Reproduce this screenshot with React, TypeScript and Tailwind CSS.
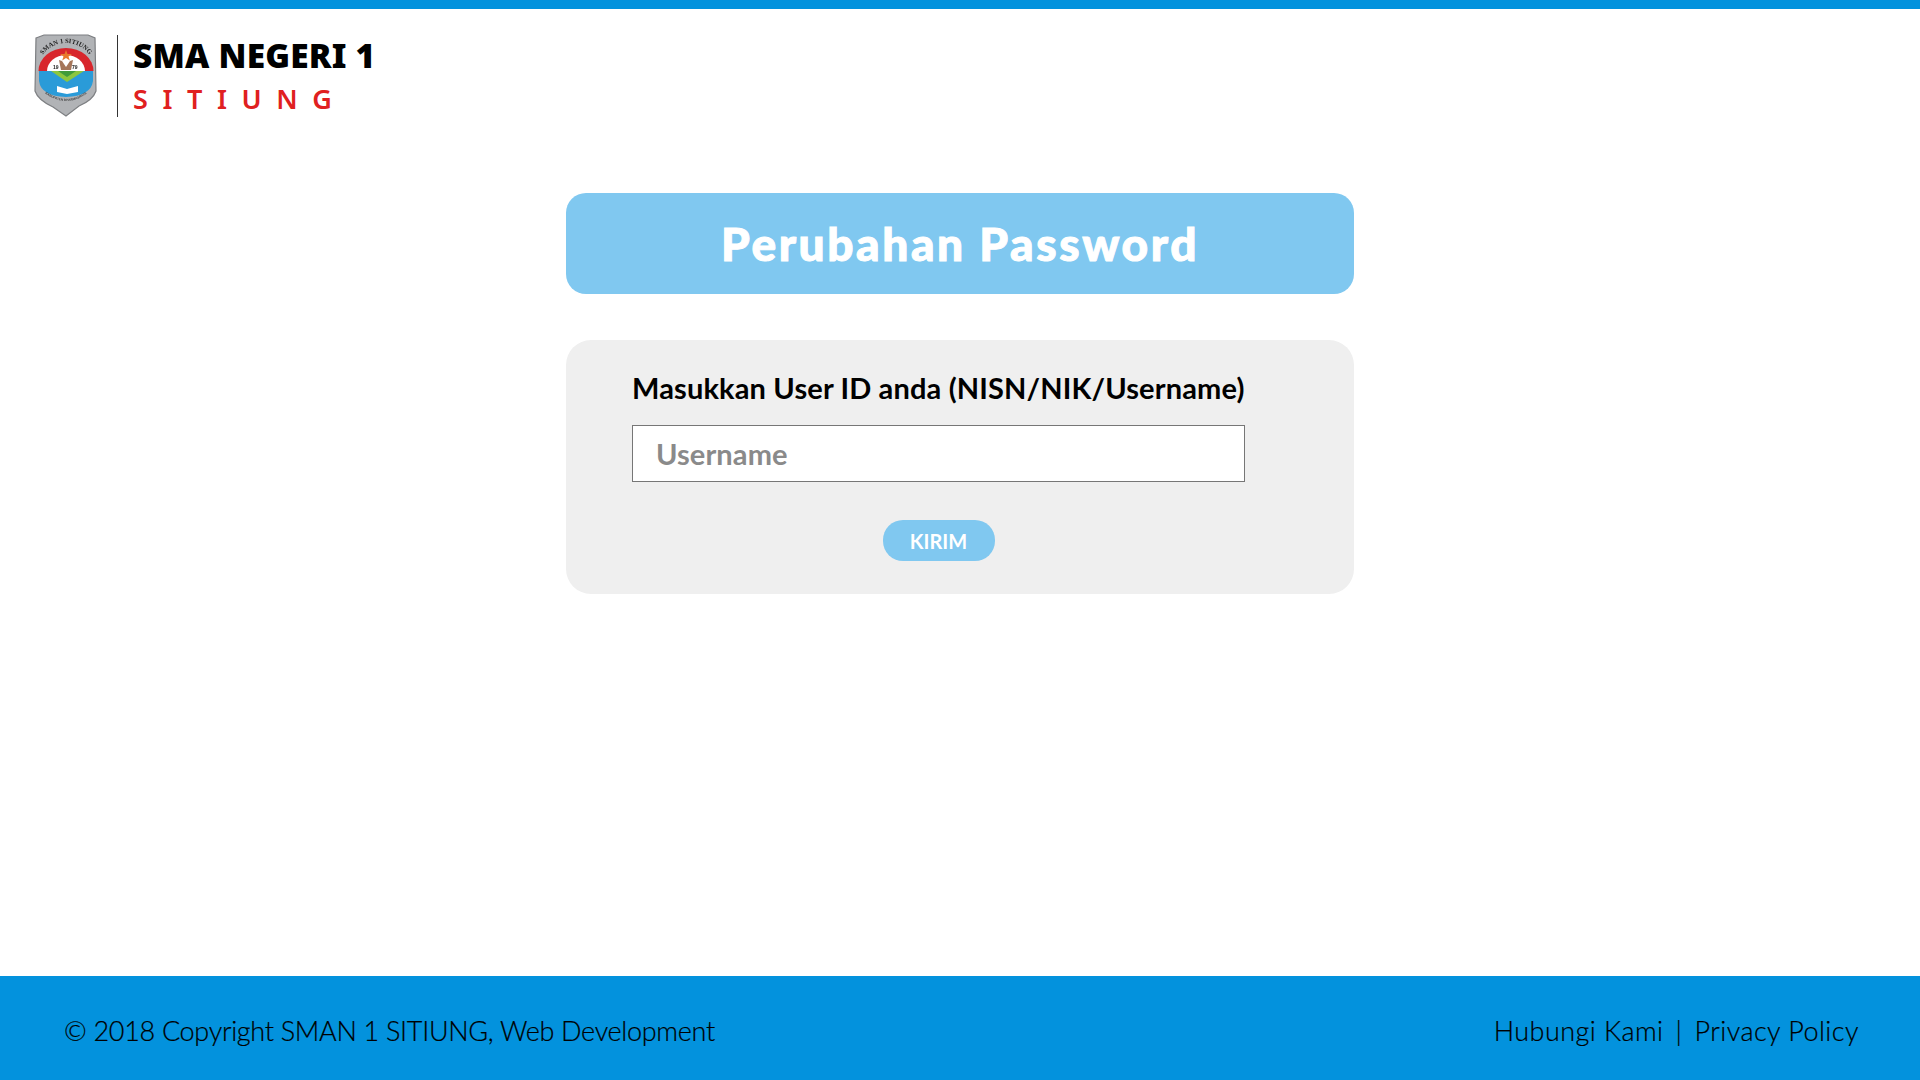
import React from "react";

function Shield() {
  return (
    <svg width="64" height="84" viewBox="0 0 64 84" className="shrink-0 blur-[0.4px]">
      <defs>
        <path id="arcTop" d="M5 36 A28 27 0 0 1 61 36" fill="none" />
        <path id="arcBot" d="M10 58 Q33 76 56 58" fill="none" />
      </defs>
      <path d="M3 4 L11 1 L55 1 L62 4 L63 57 Q60 66 46 72 L33 82 L20 73 Q5 66 2 57 Z" fill="#b1b3b6" stroke="#7d7f82" strokeWidth="1.2" />
      <path d="M5.5 37 A27.5 23 0 0 1 60.5 37 Z" fill="#d8262c" />
      <path d="M14 37 A19 16 0 0 1 52 37 Z" fill="#ffffff" />
      <path d="M6 37 L60 37 L60 47 Q58 62 33 63 Q8 62 6 47 Z" fill="#2a9bd8" />
      <path d="M18 37 L51 37 L34 48 Z" fill="#8cc63f" />
      <path d="M25 37 L43 37 L34 43 Z" fill="#3f9b3a" />
      <path d="M24 52 L34 55 L45 52 L45 58 L34 60 L24 58 Z" fill="#ffffff" />
      <path d="M33 16 L34.5 20 L39 20 L35.5 22.5 L36.8 26.5 L33 24 L29.2 26.5 L30.5 22.5 L27 20 L31.5 20 Z" fill="#e8792b" />
      <path d="M26 26 L29 27 L33 33 L37 27 L40 26 L38 36 L28 36 Z" fill="#a5765a" />
      <text x="20" y="35" fontSize="5" fontWeight="700" fill="#222222" fontFamily="Liberation Sans, sans-serif">19</text>
      <text x="39" y="35" fontSize="5" fontWeight="700" fill="#222222" fontFamily="Liberation Sans, sans-serif">79</text>
      <text fontSize="6.6" fontWeight="700" fill="#222222" fontFamily="Liberation Serif, serif" textAnchor="middle">
        <textPath href="#arcTop" startOffset="50%">SMAN 1 SITIUNG</textPath>
      </text>
      <text fontSize="3.2" fontWeight="700" fill="#444444" fontFamily="Liberation Sans, sans-serif" textAnchor="middle">
        <textPath href="#arcBot" startOffset="50%">KABUPATEN DHARMASRAYA</textPath>
      </text>
    </svg>
  );
}

export default function App() {
  return (
    <div className="flex min-h-screen flex-col bg-white font-['Lato',sans-serif] text-black">
      <div className="h-[9px] bg-[#0392dd]" />
      <header className="flex items-center pl-[33px] pt-[25px]">
        <Shield />
        <div className="ml-[20px] h-[82px] w-px bg-[#333333]" />
        <div className="ml-[15px] flex flex-col">
          <span className="-mt-[4px] font-['Noto_Sans',sans-serif] text-[33.5px] leading-[40px] font-black tracking-[0.2px]">SMA NEGERI 1</span>
          <span className="mt-[9px] font-['Noto_Sans',sans-serif] text-[27px] leading-[30px] font-semibold tracking-[14.6px] text-[#e02020]">SITIUNG</span>
        </div>
      </header>
      <main className="flex flex-1 flex-col items-center pt-[75px]">
        <div className="flex h-[101px] w-[788px] items-center justify-center rounded-[20px] bg-[#80c8f0]">
          <h1 className="text-[46px] leading-none font-black tracking-[2.6px] text-white [-webkit-text-stroke:1px_white]">Perubahan Password</h1>
        </div>
        <form className="mt-[46px] h-[254px] w-[788px] rounded-[25px] bg-[#efefef] px-[66px] pt-[30px]">
          <label className="block w-[613px] text-[29px] leading-[36px] font-bold tracking-[0.15px] whitespace-nowrap">Masukkan User ID anda (NISN/NIK/Username)</label>
          <input
            placeholder="Username"
            className="mt-[19px] block h-[57px] w-[613px] border border-[#767676] bg-white px-[23px] text-[29px] font-bold tracking-[0.1px] outline-none placeholder:text-[#8a8a8a]"
          />
          <div className="flex w-[613px] justify-center pt-[38px]">
            <button type="button" className="h-[41px] w-[112px] rounded-[20px] bg-[#80c8f0] text-[20px] font-bold text-white">KIRIM</button>
          </div>
        </form>
      </main>
      <footer className="flex h-[104px] items-center justify-between bg-[#0392dd] pr-[61px] pl-[64px] pt-[6px] text-[27px] font-light [-webkit-text-stroke:0.2px_black]">
        <span className="tracking-[-0.3px]">© 2018 Copyright SMAN 1 SITIUNG, Web Development</span>
        <span className="flex items-center tracking-[0.45px]">
          <span>Hubungi Kami</span>
          <span className="mx-[12px]">|</span>
          <span>Privacy Policy</span>
        </span>
      </footer>
    </div>
  );
}
